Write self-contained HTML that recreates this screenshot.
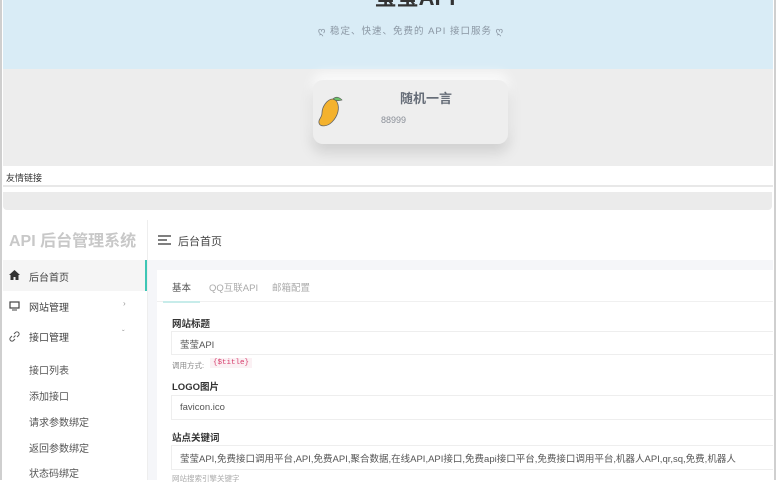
<!DOCTYPE html>
<html><head><meta charset="utf-8"><style>
*{margin:0;padding:0;box-sizing:border-box}
body{width:776px;height:480px;overflow:hidden;background:#fff;font-family:"Liberation Sans","Noto Sans CJK SC",sans-serif;position:relative;color:#333}
.a{position:absolute}
</style></head><body>
<div class="a" style="left:0;top:0;width:2px;height:480px;background:#cfcfcf"></div>
<div class="a" style="right:0;top:0;width:2px;height:480px;background:#cfcfcf"></div>
<div class="a" style="left:3px;top:0;width:770px;height:69px;background:#d9ecf6"></div>
<div class="a" style="left:0;top:-20px;width:776px;text-align:center;font-size:22px;font-weight:bold;color:#333;padding-left:54px">莹莹API</div>
<div class="a" style="left:0;top:23px;width:776px;text-align:center;font-size:9.5px;color:#8a96a3;padding-left:46px;letter-spacing:1px">ღ 稳定、快速、免费的 API 接口服务 ღ</div>
<div class="a" style="left:3px;top:69px;width:770px;height:97px;background:#ededed"></div>
<div class="a" style="left:313px;top:80px;width:195px;height:64px;background:#eeeeee;border-radius:10px;box-shadow:0 8px 14px rgba(0,0,0,.13),0 -6px 12px rgba(255,255,255,.9)"></div>
<svg class="a" style="left:317px;top:95px" width="36" height="34" viewBox="0 0 36 34"><path d="M16 4c-6 0-11 8-11 14 0 5-4 6-3 10 1 4 8 4 13-1 6-6 8-14 5-20-1-2-2-3-4-3z" fill="#f4b22e" stroke="#666" stroke-width="0.8"/><path d="M16 4c3-3 6-2 9 1-3 1-6 1-9-1z" fill="#6cc16a" stroke="#555" stroke-width="0.6"/></svg>
<div class="a" style="left:400px;top:88px;font-size:13px;font-weight:bold;color:#666d78">随机一言</div>
<div class="a" style="left:381px;top:115px;font-size:9px;color:#8a8f98">88999</div>
<div class="a" style="left:6px;top:171px;font-size:9px;color:#333">友情链接</div>
<div class="a" style="left:3px;top:185px;width:770px;height:2px;background:#e8e8e8"></div>
<div class="a" style="left:3px;top:192px;width:769px;height:18px;background:#ebebeb;border-radius:0 0 4px 4px"></div>
<div class="a" style="left:9px;top:227px;font-size:16px;font-weight:bold;color:#c8c8c8">API 后台管理系统</div>
<div class="a" style="left:147px;top:220px;width:1px;height:260px;background:#eee"></div>
<div class="a" style="left:3px;top:260px;width:144px;height:31px;background:#f5f5f5;border-right:2px solid #3dc6b5"></div>
<svg class="a" style="left:9px;top:270px" width="11" height="10" viewBox="0 0 11 10"><path d="M5.5 0L0 5h1.5v5h3V7h2v3h3V5H11z" fill="#333"/></svg>
<div class="a" style="left:29px;top:269px;font-size:10px;color:#444">后台首页</div>
<svg class="a" style="left:9px;top:301px" width="11" height="10"><rect x="1" y="1" width="9" height="6" fill="none" stroke="#444" stroke-width="1.2"/><path d="M3 9h5" stroke="#444"/></svg>
<div class="a" style="left:29px;top:299px;font-size:10px;color:#444">网站管理</div>
<div class="a" style="left:123px;top:299px;font-size:8px;color:#999">›</div>
<svg class="a" style="left:9px;top:331px" width="11" height="11" viewBox="0 0 11 11"><path d="M4.5 6.5l2-2M5 3l1.5-1.5a2 2 0 013 3L8 6M6 8L4.5 9.5a2 2 0 01-3-3L3 5" fill="none" stroke="#555" stroke-width="1"/></svg>
<div class="a" style="left:29px;top:329px;font-size:10px;color:#444">接口管理</div>
<div class="a" style="left:122px;top:329px;font-size:8px;color:#999">ˇ</div>
<div class="a" style="left:29px;top:362px;font-size:10px;color:#555">接口列表</div>
<div class="a" style="left:29px;top:388px;font-size:10px;color:#555">添加接口</div>
<div class="a" style="left:29px;top:414px;font-size:10px;color:#555">请求参数绑定</div>
<div class="a" style="left:29px;top:440px;font-size:10px;color:#555">返回参数绑定</div>
<div class="a" style="left:29px;top:465px;font-size:10px;color:#555">状态码绑定</div>
<svg class="a" style="left:158px;top:235px" width="13" height="10"><path d="M0 1h13M0 5h9M0 9h13" stroke="#333" stroke-width="1.3"/></svg>
<div class="a" style="left:178px;top:233px;font-size:11px;color:#444">后台首页</div>
<div class="a" style="left:148px;top:260px;width:625px;height:220px;background:#f5f6f9"></div>
<div class="a" style="left:157px;top:270px;width:616px;height:210px;background:#fff"></div>
<div class="a" style="left:157px;top:301px;width:616px;height:1px;background:#f0f0f0"></div>
<div class="a" style="left:172px;top:280px;font-size:9.5px;color:#555">基本</div>
<div class="a" style="left:163px;top:301px;width:37px;height:2px;background:#c7ecea"></div>
<div class="a" style="left:209px;top:280px;font-size:9.5px;color:#aaa">QQ互联API</div>
<div class="a" style="left:272px;top:280px;font-size:9.5px;color:#aaa">邮箱配置</div>
<div class="a" style="left:172px;top:316px;font-size:9.5px;font-weight:bold;color:#333">网站标题</div>
<div class="a" style="left:171px;top:331px;width:602px;height:24px;border:1px solid #eee;border-right:none"></div>
<div class="a" style="left:180px;top:337px;font-size:9.5px;color:#555">莹莹API</div>
<div class="a" style="left:172px;top:360px;font-size:7.5px;color:#888">调用方式:</div>
<div class="a" style="left:210px;top:358px;font-size:7.5px;color:#d63a6a;background:#fbf1f4;padding:1px 3px;font-family:'Liberation Mono',monospace">{$title}</div>
<div class="a" style="left:172px;top:379px;font-size:9.5px;font-weight:bold;color:#333">LOGO图片</div>
<div class="a" style="left:171px;top:395px;width:602px;height:25px;border:1px solid #eee;border-right:none"></div>
<div class="a" style="left:180px;top:402px;font-size:9.5px;color:#555">favicon.ico</div>
<div class="a" style="left:172px;top:430px;font-size:9.5px;font-weight:bold;color:#333">站点关键词</div>
<div class="a" style="left:171px;top:445px;width:602px;height:25px;border:1px solid #eee;border-right:none"></div>
<div class="a" style="left:180px;top:451px;font-size:9.5px;color:#555;white-space:nowrap">莹莹API,免费接口调用平台,API,免费API,聚合数据,在线API,API接口,免费api接口平台,免费接口调用平台,机器人API,qr,sq,免费,机器人</div>
<div class="a" style="left:172px;top:473px;font-size:7.5px;color:#aaa">网站搜索引擎关键字</div>
</body></html>
